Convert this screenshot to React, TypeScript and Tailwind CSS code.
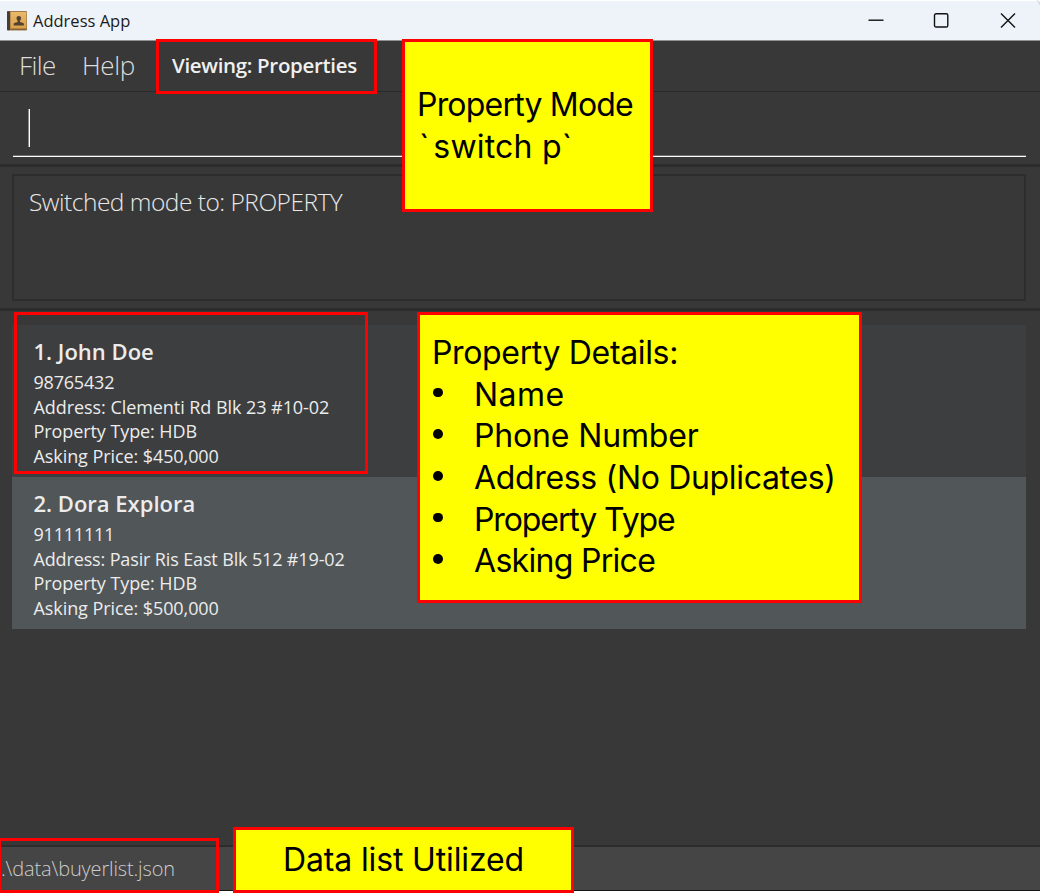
type Property = {
  title: string;
  phone: string;
  address: string;
  type: string;
  price: string;
  background: string;
  addressTracking: string;
};

const properties: Property[] = [
  {
    title: "1. John Doe",
    phone: "98765432",
    address: "Clementi Rd Blk 23 #10-02",
    type: "HDB",
    price: "$450,000",
    background: "bg-[#3c3e3f]",
    addressTracking: "tracking-[-0.06px]",
  },
  {
    title: "2. Dora Explora",
    phone: "91111111",
    address: "Pasir Ris East Blk 512 #19-02",
    type: "HDB",
    price: "$500,000",
    background: "bg-[#515658]",
    addressTracking: "tracking-[-0.14px]",
  },
];

const details = [
  { label: "Name", tracking: "tracking-[0.5px]" },
  { label: "Phone Number", tracking: "tracking-[-0.15px]" },
  { label: "Address (No Duplicates)", tracking: "tracking-[-0.33px]" },
  { label: "Property Type", tracking: "tracking-[-1.1px]" },
  { label: "Asking Price", tracking: "tracking-[-0.7px]" },
];

function BookIcon() {
  return (
    <svg className="h-5 w-5" viewBox="0 0 20 20">
      <defs>
        <linearGradient id="cover" x1="0" y1="0" x2="0" y2="1">
          <stop offset="0" stopColor="#e9b96c" />
          <stop offset="1" stopColor="#d9a04a" />
        </linearGradient>
      </defs>
      <rect x="0" y="0" width="20" height="19.5" rx="1" fill="#a07a48" />
      <rect x="0" y="0.3" width="3" height="19" rx="0.8" fill="#4a3d38" />
      <rect x="3.6" y="1" width="15.7" height="16.8" fill="url(#cover)" />
      <path d="M3.6 18.200h16" stroke="#6e512d" strokeWidth="0.9" />
      <path
        d="M11.800 5c1.600 0 2.400 1 2.300 2.500-.1 1-.5 1.800-1.100 2.300v1.100l3.200 1c.5.2.7.7.7 1.800v.9H6.700v-.9c0-1.100.2-1.600.7-1.800l3.200-1V9.800c-.6-.5-1-1.300-1.100-2.300C9.400 6 10.200 5 11.800 5z"
        fill="#54412f"
      />
    </svg>
  );
}

function TitleBar() {
  return (
    <header className="flex h-[41px] shrink-0 items-center border-t border-b border-t-white border-b-[#8f9295] bg-[#eef3f9] pl-[7px] pr-6">
      <BookIcon />
      <span className="ml-[6px] text-[16.5px] leading-6 text-[#1b1b1b]">Address App</span>
      <div className="ml-auto flex items-center">
        <svg className="h-4 w-4" viewBox="0 0 16 16" fill="none" stroke="#111" strokeWidth="1.4">
          <path d="M0.500 7.200h15" />
        </svg>
        <svg className="ml-[49px] h-4 w-4" viewBox="0 0 16 16" fill="none" stroke="#111" strokeWidth="1.4">
          <rect x="1.500" y="0.700" width="13.300" height="13.300" rx="1.600" />
        </svg>
        <svg className="ml-[51px] h-4 w-4" viewBox="0 0 16 16" fill="none" stroke="#111" strokeWidth="1.4">
          <path d="M1 0.500l14 14M15 0.500l-14 14" />
        </svg>
      </div>
    </header>
  );
}

function PropertyCell({ property }: { property: Property }) {
  return (
    <li className={`h-[152px] pl-[21.500px] pt-[11px] text-[#ececec] ${property.background}`}>
      <h2 className="mb-1 text-[22px] leading-[30px] font-semibold">{property.title}</h2>
      <div className="text-[18px] leading-[24.7px] tracking-[-0.08px]">
        <p className="tracking-[-0.2px]">{property.phone}</p>
        <p className={property.addressTracking}>Address: {property.address}</p>
        <p>Property Type: {property.type}</p>
        <p>Asking Price: {property.price}</p>
      </div>
    </li>
  );
}

function Callouts() {
  return (
    <div className="font-['Inter',sans-serif] text-[32px] leading-[41.6px] whitespace-nowrap text-black">
      <div className="absolute top-[39px] left-[156px] h-[55px] w-[221px] border-3 border-[#ff0000]" />
      <div className="absolute top-[312px] left-[14px] h-[162px] w-[354px] border-3 border-[#ff0000]" />
      <div className="absolute top-[838px] left-[-2px] h-[55px] w-[221px] border-3 border-[#ff0000]" />

      <div className="absolute top-[39px] left-[402px] flex h-[173px] w-[251px] flex-col justify-center border-3 border-[#ff0000] bg-[#ffff00] pl-3">
        <p className="tracking-[-0.8px]">Property Mode</p>
        <p className="pl-[2px]">
          <span className="tracking-[4px]">`</span>
          <span className="tracking-[0.2px]">switch p`</span>
        </p>
      </div>

      <div className="absolute top-[312px] left-[417px] flex h-[291px] w-[445px] flex-col justify-center border-3 border-[#ff0000] bg-[#ffff00] pb-[1px] pl-3">
        <p className="tracking-[-0.35px]">Property Details:</p>
        <ul>
          {details.map((detail) => (
            <li key={detail.label} className="flex items-center">
              <span className="mr-[31.500px] mb-1 ml-[1px] h-[9.500px] w-[9.500px] rounded-full bg-black" />
              <span className={detail.tracking}>{detail.label}</span>
            </li>
          ))}
        </ul>
      </div>

      <div className="absolute top-[827px] left-[233px] flex h-[66px] w-[341px] items-center justify-center border-3 border-[#ff0000] bg-[#ffff00]">
        <p className="tracking-[-0.15px]">Data list Utilized</p>
      </div>
    </div>
  );
}

export default function App() {
  return (
    <div className="relative flex h-[894px] w-[1040px] flex-col overflow-hidden bg-white font-['Open_Sans',sans-serif]">
      <div className="flex h-[891px] flex-col overflow-hidden rounded-tr-[5px] border-b border-[#151515] bg-[#383838]">
        <TitleBar />
        <nav className="flex h-[51px] shrink-0 items-center border-b border-[#2a2a2a] pb-[1px] pl-[19px] text-[26px] font-light text-[#dddddd]">
          <span className="w-[37px] tracking-[-0.6px]">File</span>
          <span className="ml-[26px] w-[53px] tracking-[-0.4px]">Help</span>
          <span className="ml-[37px] text-[20.5px] font-semibold tracking-[-0.33px] text-[#f0f0f0]">Viewing: Properties</span>
        </nav>
        <section className="flex h-[75px] shrink-0 flex-col border-b-3 border-[#2c2c2c] px-[13px] pt-[17px]">
          <div className="ml-[15px] h-[38px] w-[2px] border-r border-white bg-[#8a8a8a]" />
          <div className="mt-2 mr-[1px] h-[2px] border-b border-white bg-[#6d6d6d]" />
        </section>
        <section className="flex h-[144px] shrink-0 flex-col border-b-3 border-[#2c2c2c] pt-[7px] pr-[14px] pb-[7px] pl-3">
          <div className="h-[127px] border-2 border-[#2d2d2d] pt-[9px] pl-[15px] text-[24.5px] leading-[34px] font-light tracking-[-0.5px] text-[#e8e8e8]">
            Switched mode to: PROPERTY
          </div>
        </section>
        <main className="flex-1 pt-[14px] pr-[14px] pl-3">
          <ul>
            {properties.map((property) => (
              <PropertyCell key={property.title} property={property} />
            ))}
          </ul>
        </main>
        <footer className="flex h-[45px] shrink-0 items-center border-t-2 border-[#2c2c2c] bg-[#454545] pl-[1px] text-[20px] font-light tracking-[-0.15px] text-[#cccccc]">
          .\data\buyerlist.json
        </footer>
      </div>
      <Callouts />
    </div>
  );
}
